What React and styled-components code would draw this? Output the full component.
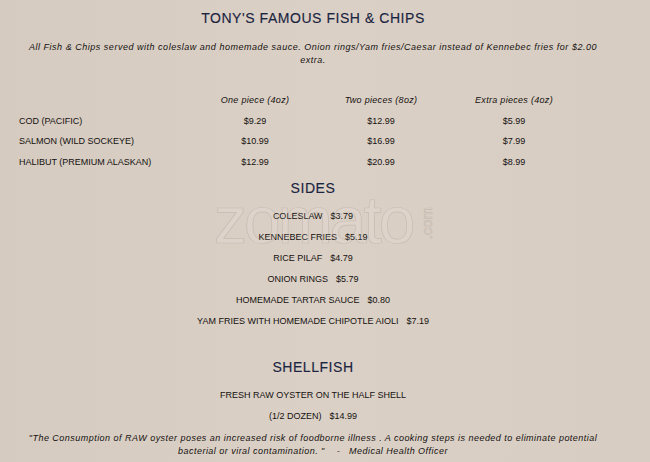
import React from "react";
import styled, { createGlobalStyle } from "styled-components";

const Global = createGlobalStyle`
  html, body {
    margin: 0;
    padding: 0;
    background: #d9cec3;
  }
  body {
    font-family: "Liberation Sans", Arial, sans-serif;
    color: #14110f;
  }
`;

const Page = styled.div`
  position: relative;
  width: 650px;
  height: 462px;
  overflow: hidden;
  background: linear-gradient(90deg, #d6cbc0 0%, #dbd0c6 50%, #d8cdc2 100%);
`;

const Content = styled.div`
  width: 626px;
  display: flex;
  flex-direction: column;
  align-items: center;
  padding-top: 9px;
`;

const Heading = styled.h2`
  margin: ${p => p.$margin || "0"};
  font-size: 14px;
  font-weight: normal;
  letter-spacing: 0.55px;
  color: #1b2541;
  line-height: 18px;
  -webkit-text-stroke: 0.15px #1b2541;
`;

const Note = styled.p`
  margin: ${p => p.$margin || "0"};
  font-size: 9px;
  font-style: italic;
  letter-spacing: ${p => p.$spacing || 0.52}px;
  line-height: 13px;
  text-align: center;
  padding: 0 20px;
`;

const Table = styled.div`
  align-self: flex-start;
  display: grid;
  grid-template-columns: 180px 112px 140px 126px;
  grid-auto-rows: 20.5px;
  align-items: center;
  padding-left: 19px;
  margin-top: 23px;
  font-size: 9px;
`;

const Cell = styled.div`
  text-align: ${p => (p.$left ? "left" : "center")};
  font-style: ${p => (p.$italic ? "italic" : "normal")};
  letter-spacing: ${p => (p.$italic ? "0.3px" : "0")};
`;

const List = styled.div`
  display: flex;
  flex-direction: column;
  align-items: center;
  margin-top: 8px;
  font-size: 9px;
`;

const Item = styled.div`
  display: flex;
  gap: 8px;
  height: 21px;
  align-items: center;
`;

const Watermark = styled.div`
  position: absolute;
  left: 214px;
  top: 182px;
  display: flex;
  align-items: center;
  pointer-events: none;
  font-family: "Liberation Sans", Arial, sans-serif;
  color: rgba(255, 255, 255, 0.1);
  -webkit-text-stroke: 0.7px rgba(140, 128, 116, 0.26);
`;

const WmWord = styled.span`
  font-size: 66px;
  letter-spacing: -3px;
`;

const WmDot = styled.span`
  font-size: 15px;
  writing-mode: vertical-rl;
  transform: rotate(180deg);
  margin-left: 6px;
  margin-top: 6px;
`;

const fish = [
  ["COD (PACIFIC)", "$9.29", "$12.99", "$5.99"],
  ["SALMON (WILD SOCKEYE)", "$10.99", "$16.99", "$7.99"],
  ["HALIBUT (PREMIUM ALASKAN)", "$12.99", "$20.99", "$8.99"],
];

const sides = [
  ["COLESLAW", "$3.79"],
  ["KENNEBEC FRIES", "$5.19"],
  ["RICE PILAF", "$4.79"],
  ["ONION RINGS", "$5.79"],
  ["HOMEMADE TARTAR SAUCE", "$0.80"],
  ["YAM FRIES WITH HOMEMADE CHIPOTLE AIOLI", "$7.19"],
];

export default function App() {
  return (
    <Page>
      <Global />
      <Watermark>
        <WmWord>zomato</WmWord>
        <WmDot>.com</WmDot>
      </Watermark>
      <Content>
        <Heading>TONY'S FAMOUS FISH &amp; CHIPS</Heading>
        <Note $margin="14px 0 0">
          All Fish &amp; Chips served with coleslaw and homemade sauce. Onion rings/Yam fries/Caesar instead of Kennebec fries for $2.00
          <br />
          extra.
        </Note>
        <Table>
          <Cell />
          <Cell $italic>One piece (4oz)</Cell>
          <Cell $italic>Two pieces (8oz)</Cell>
          <Cell $italic>Extra pieces (4oz)</Cell>
          {fish.map(row => (
            <React.Fragment key={row[0]}>
              <Cell $left>{row[0]}</Cell>
              <Cell>{row[1]}</Cell>
              <Cell>{row[2]}</Cell>
              <Cell>{row[3]}</Cell>
            </React.Fragment>
          ))}
        </Table>
        <Heading $margin="7px 0 0">SIDES</Heading>
        <List>
          {sides.map(([name, price]) => (
            <Item key={name}>
              <span>{name}</span>
              <span>{price}</span>
            </Item>
          ))}
        </List>
        <Heading $margin="27px 0 0">SHELLFISH</Heading>
        <List>
          <Item>FRESH RAW OYSTER ON THE HALF SHELL</Item>
          <Item>
            <span>(1/2 DOZEN)</span>
            <span>$14.99</span>
          </Item>
        </List>
        <Note $margin="6px 0 0" $spacing={0.47}>
          "The Consumption of RAW oyster poses an increased risk of foodborne illness . A cooking steps is needed to eliminate potential
          <br />
          bacterial or viral contamination. "&nbsp;&nbsp;&nbsp; - &nbsp;&nbsp;Medical Health Officer
        </Note>
      </Content>
    </Page>
  );
}
